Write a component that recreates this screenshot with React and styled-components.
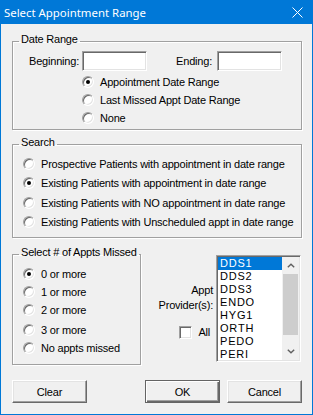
import React from 'react'
import styled, { createGlobalStyle } from 'styled-components'

const GlobalStyle = createGlobalStyle`
    html, body {
        margin: 0;
        padding: 0;
        background: #ffffff;
    }
    body {
        font-family: "Liberation Sans", Arial, sans-serif;
        font-size: 11px;
        letter-spacing: -0.2px;
        color: #000;
    }
`;

const Window = styled.div`
    width: 313px;
    height: 415px;
    box-sizing: border-box;
    border: 1px solid #0078d7;
    background: #f0f0f0;
    display: flex;
    flex-direction: column;
`;

const TitleBar = styled.div`
    height: 23px;
    flex: none;
    background: #0078d7;
    color: #fff;
    display: flex;
    align-items: center;
    justify-content: space-between;
    padding: 0 9px 0 3px;
    font-family: "Noto Sans", "Open Sans", sans-serif;
    font-size: 11.4px;
    letter-spacing: 0;
`;

const Body = styled.div`
    padding: 0 10px 0 11px;
    display: flex;
    flex-direction: column;
`;

const Group = styled.fieldset`
    margin: ${p => p.$mt || 0}px 0 0;
    padding: ${p => p.$pt || 0}px 0 ${p => p.$pb || 0}px;
    border: 1px solid #a0a0a0;
    box-shadow: inset 1px 1px #fff, 1px 1px #fff;
    min-width: 0;
    box-sizing: border-box;
    width: ${p => (p.$w ? p.$w + 'px' : 'auto')};
    flex: none;
`;

const Legend = styled.legend`
    margin-left: 6px;
    padding: 0 2px 4px;
    line-height: 13px;
    white-space: nowrap;
`;

const InputRow = styled.div`
    display: flex;
    align-items: center;
    height: 20px;
`;

const FieldLabel = styled.label`
    width: ${p => p.$w}px;
    box-sizing: border-box;
    padding-right: ${p => p.$pr}px;
    text-align: right;
`;

const TextBox = styled.input`
    width: 65px;
    height: 20px;
    box-sizing: border-box;
    margin: 0;
    padding: 0 2px;
    background: #fff;
    border: 1px solid;
    border-color: #a0a0a0 #fff #fff #a0a0a0;
    box-shadow: inset 1px 1px #696969, inset -1px -1px #e3e3e3;
    outline: none;
    font: inherit;
`;

const RadioList = styled.div`
    display: flex;
    flex-direction: column;
    padding-left: ${p => p.$indent}px;
    margin-top: ${p => p.$mt || 0}px;
`;

const RadioRow = styled.div`
    display: flex;
    align-items: center;
    height: ${p => p.$h}px;
    margin-top: ${p => p.$gap || 0}px;
    white-space: nowrap;
`;

const RadioDot = styled.span`
    position: relative;
    flex: none;
    width: 12px;
    height: 12px;
    box-sizing: border-box;
    margin-right: 6px;
    border-radius: 50%;
    background: #fff;
    border: 1px solid;
    border-color: #a0a0a0 #fff #fff #a0a0a0;
    box-shadow: inset 1px 1px #696969, inset -1px -1px #e3e3e3;
    &::after {
        content: "";
        display: ${p => (p.$checked ? 'block' : 'none')};
        position: absolute;
        left: 3px;
        top: 3px;
        width: 4px;
        height: 4px;
        border-radius: 50%;
        background: #000;
    }
`;

const BottomRow = styled.div`
    display: flex;
    align-items: flex-start;
    margin-top: 8px;
`;

const ProviderLabels = styled.div`
    width: 75px;
    box-sizing: border-box;
    padding: 37px 3px 0 0;
    display: flex;
    flex-direction: column;
    align-items: flex-end;
    line-height: 15px;
`;

const CheckRow = styled.div`
    display: flex;
    align-items: center;
    height: 13px;
    margin: 13px 3px 0 0;
`;

const CheckBox = styled.span`
    width: 13px;
    height: 13px;
    box-sizing: border-box;
    margin-right: 6px;
    background: #fff;
    border: 1px solid;
    border-color: #a0a0a0 #fff #fff #a0a0a0;
    box-shadow: inset 1px 1px #696969, inset -1px -1px #e3e3e3;
`;

const ListBox = styled.div`
    width: 85px;
    height: 107px;
    box-sizing: border-box;
    margin-top: 9px;
    display: flex;
    background: #fff;
    border: 1px solid;
    border-color: #a0a0a0 #fff #fff #a0a0a0;
    box-shadow: inset 1px 1px #696969, inset -1px -1px #e3e3e3;
    padding: 1px;
`;

const Items = styled.div`
    flex: 1;
    overflow: hidden;
    display: flex;
    flex-direction: column;
`;

const Item = styled.div`
    height: 13px;
    line-height: 13px;
    padding-left: 2px;
    letter-spacing: 0.8px;
    flex: none;
    background: ${p => (p.$selected ? '#0078d7' : 'transparent')};
    color: ${p => (p.$selected ? '#fff' : '#000')};
`;

const ScrollBar = styled.div`
    width: 17px;
    flex: none;
    display: flex;
    flex-direction: column;
    background: #f0f0f0;
`;

const ArrowButton = styled.div`
    height: 17px;
    flex: none;
    display: flex;
    align-items: center;
    justify-content: center;
`;

const Thumb = styled.div`
    height: 61px;
    margin: 0 1px;
    background: #cdcdcd;
    flex: none;
`;

const Track = styled.div`
    flex: 1;
`;

const ButtonRow = styled.div`
    display: flex;
    margin-top: 15px;
`;

const Spacer = styled.div`
    flex: 1;
`;

const Button = styled.button`
    width: 75px;
    height: 23px;
    box-sizing: border-box;
    margin: 0 0 0 ${p => p.$ml || 0}px;
    padding: 0;
    background: #f0f0f0;
    font: inherit;
    letter-spacing: inherit;
    color: #000;
    border: 1px solid;
    border-color: ${p => (p.$default ? '#646464' : '#fff #696969 #696969 #fff')};
    box-shadow: ${p => (p.$default
        ? 'inset 1px 1px #fff, inset -1px -1px #696969, inset -2px -2px #a0a0a0'
        : 'inset -1px -1px #a0a0a0, inset 1px 1px #e3e3e3')};
`;

const Chevron = ({ down }) => (
    <svg width="8" height="5" viewBox="0 0 8 5">
        <path
            d={down ? 'M0.8 0.8 L4 3.8 L7.2 0.8' : 'M0.8 4.2 L4 1.2 L7.2 4.2'}
            fill="none"
            stroke="#606060"
            strokeWidth="1.4"
        />
    </svg>
);

const CloseIcon = () => (
    <svg width="11" height="11" viewBox="0 0 11 11">
        <path d="M0.5 0.5 L10.5 10.5 M10.5 0.5 L0.5 10.5" stroke="#fff" strokeWidth="1" />
    </svg>
);

const Radio = ({ checked, h, gap, children }) => (
    <RadioRow $h={h} $gap={gap}>
        <RadioDot $checked={checked} />
        {children}
    </RadioRow>
);

const searchOptions = [
    'Prospective Patients with appointment in date range',
    'Existing Patients with appointment in date range',
    'Existing Patients with NO appointment in date range',
    'Existing Patients with Unscheduled appt in date range',
];

const missedOptions = ['0 or more', '1 or more', '2 or more', '3 or more', 'No appts missed'];

const providers = ['DDS1', 'DDS2', 'DDS3', 'ENDO', 'HYG1', 'ORTH', 'PEDO', 'PERI'];

export default function App() {
    return (
        <>
            <GlobalStyle />
            <Window>
                <TitleBar>
                    <span>Select Appointment Range</span>
                    <CloseIcon />
                </TitleBar>
                <Body>
                    <Group $mt={9} $pt={1} $pb={2}>
                        <Legend>Date Range</Legend>
                        <InputRow>
                            <FieldLabel $w={69} $pr={3}>Beginning:</FieldLabel>
                            <TextBox />
                            <FieldLabel $w={70} $pr={5}>Ending:</FieldLabel>
                            <TextBox />
                        </InputRow>
                        <RadioList $indent={69} $mt={2}>
                            <Radio h={18} checked>Appointment Date Range</Radio>
                            <Radio h={18}>Last Missed Appt Date Range</Radio>
                            <Radio h={18}>None</Radio>
                        </RadioList>
                    </Group>

                    <Group $mt={6} $pt={1} $pb={5}>
                        <Legend>Search</Legend>
                        <RadioList $indent={10}>
                            {searchOptions.map((s, i) => (
                                <Radio key={s} h={19.5} checked={i === 1}>{s}</Radio>
                            ))}
                        </RadioList>
                    </Group>

                    <BottomRow>
                        <Group $w={129} $pt={2} $pb={7}>
                            <Legend>Select # of Appts Missed</Legend>
                            <RadioList $indent={10}>
                                {missedOptions.map((s, i) => (
                                    <Radio key={s} h={18} gap={i === 3 ? 2 : 0} checked={i === 0}>{s}</Radio>
                                ))}
                            </RadioList>
                        </Group>
                        <ProviderLabels>
                            <span>Appt</span>
                            <span>Provider(s):</span>
                            <CheckRow>
                                <CheckBox />
                                <span>All</span>
                            </CheckRow>
                        </ProviderLabels>
                        <ListBox>
                            <Items>
                                {providers.map((p, i) => (
                                    <Item key={p} $selected={i === 0}>{p}</Item>
                                ))}
                            </Items>
                            <ScrollBar>
                                <ArrowButton><Chevron /></ArrowButton>
                                <Thumb />
                                <Track />
                                <ArrowButton><Chevron down /></ArrowButton>
                            </ScrollBar>
                        </ListBox>
                    </BottomRow>

                    <ButtonRow>
                        <Button>Clear</Button>
                        <Spacer />
                        <Button $default>OK</Button>
                        <Button $ml={7}>Cancel</Button>
                    </ButtonRow>
                </Body>
            </Window>
        </>
    );
}
